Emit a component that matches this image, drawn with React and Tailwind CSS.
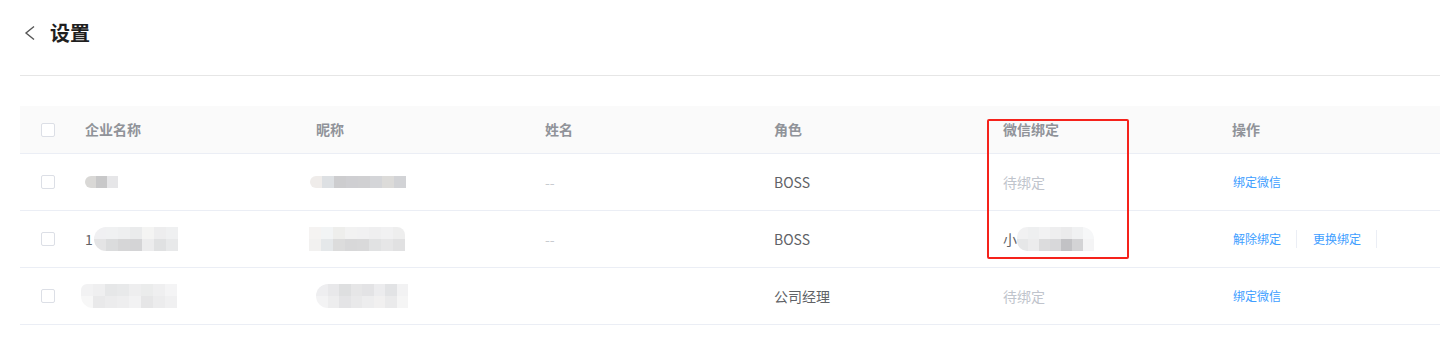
import React from 'react';

const cols = 'grid grid-cols-[53px_231px_229px_229px_229px_229px_1fr]';

const Checkbox = () => (
    <span className="block h-[14px] w-[14px] rounded-[2px] border border-[#dcdfe6] bg-white" />
);

// pixelated placeholder used where the original hides personal data
const Mosaic = ({ rows, tile = 12, className = '' }) => (
    <div className={`inline-flex flex-col overflow-hidden ${className}`}>
        {rows.map((row, i) => (
            <div key={i} className="flex">
                {row.map((c, j) => (
                    <span key={j} className="block" style={{ width: tile, height: 12, background: c }} />
                ))}
            </div>
        ))}
    </div>
);

const rows = [
    {
        company: <Mosaic className="rounded-l-full" tile={11} rows={[['#d9d8d6', '#c8c8c9', '#e6e6e8']]} />,
        nick: (
            <Mosaic
                className="-ml-[6px] rounded-l-[6px]"
                rows={[['#efecea', '#dde0e3', '#cdcdcf', '#cfcfd2', '#d0d0d2', '#d4d5d8', '#dcdbd9', '#d2d3d6']]}
            />
        ),
        role: 'BOSS',
        bound: null,
        actions: ['绑定微信'],
    },
    {
        company: (
            <div className="flex items-center">
                <span className="mr-px">1</span>
                <Mosaic
                    className="rounded-l-[12px]"
                    rows={[
                        ['#f0f0f2', '#f0f1f2', '#eeeff0', '#eaebec', '#f4f4f3', '#ededee', '#eff0f1'],
                        ['#e4e4e5', '#dbdcdd', '#d6d6d7', '#d4d4d6', '#ececed', '#e0e1e2', '#e8e9ea'],
                    ]}
                />
            </div>
        ),
        nick: (
            <Mosaic
                className="-ml-[7px] rounded-tr-[8px]"
                rows={[
                    ['#f5f3f2', '#f2f4f5', '#eeeeec', '#f2f2f2', '#f1f1f2', '#efeff0', '#f1f1f2', '#eeeeee'],
                    ['#f2f1f0', '#e5e8ea', '#dcdcdc', '#d8d8d9', '#d9d9da', '#e1e2e3', '#e6e6e7', '#e1e1e2'],
                ]}
            />
        ),
        role: 'BOSS',
        bound: (
            <div className="flex items-center">
                <span>小</span>
                <Mosaic
                    className="rounded-l-[10px] rounded-tr-[12px]"
                    tile={11}
                    rows={[
                        ['#f1f1f2', '#eeeff0', '#f2f2f3', '#eeeeef', '#ebebec', '#f0f1f2', '#f6f7f8'],
                        ['#e6e7e8', '#ececed', '#dcdcdd', '#d8d8da', '#c2c2c5', '#d3d3d5', '#f4f4f5'],
                    ]}
                />
            </div>
        ),
        actions: ['解除绑定', '更换绑定'],
    },
    {
        company: (
            <Mosaic
                className="-ml-[4px] rounded-bl-[12px] rounded-tl-[6px]"
                rows={[
                    ['#f2f2f3', '#efeff0', '#e6e7e8', '#e8e9ea', '#eeeeef', '#ebecec', '#efeff0', '#f4f4f5'],
                    ['#f7f7f7', '#e9e9ea', '#ececed', '#eeeeef', '#f2f2f3', '#e6e6e7', '#ececed', '#f0f0f1'],
                ]}
            />
        ),
        nick: (
            <Mosaic
                className="rounded-l-[12px]"
                tile={11.5}
                rows={[
                    ['#eeeef0', '#e8e8ea', '#dedfe0', '#e6e6e7', '#e3e3e5', '#ececee', '#e2e3e5', '#f2f2f3'],
                    ['#f3f3f4', '#ededee', '#e4e4e6', '#e9e9ea', '#ededee', '#f1f0f0', '#eaeaeb', '#f5f5f5'],
                ]}
            />
        ),
        name: '',
        role: '公司经理',
        bound: null,
        actions: ['绑定微信'],
    },
];

const App = () => {
    return (
        <div className="min-h-screen bg-white font-['Noto_Sans_CJK_SC','Noto_Sans',sans-serif] text-[14px] text-[#606266]">
            <div className="flex h-[75px] items-start pl-6 pt-[21px]">
                <div className="flex h-6 items-center">
                    <svg width="12" height="16" viewBox="0 0 12 16" fill="none" className="mr-[14px]">
                        <path d="M10 1.5L2 8l8 6.5" stroke="#555" strokeWidth="1.4" />
                    </svg>
                    <h1 className="text-[20px] font-bold leading-6 text-[#1f1f1f]">设置</h1>
                </div>
            </div>
            <div className="ml-5 h-px bg-[#e6e6e6]" />

            <div className="relative ml-5 mt-[30px]">
                <div className={`${cols} h-[48px] items-center border-b border-[#ebeef5] bg-[#fafafa] font-bold text-[#909399]`}>
                    <div className="pl-[21px]">
                        <Checkbox />
                    </div>
                    <div className="pl-3">企业名称</div>
                    <div className="pl-3">昵称</div>
                    <div className="pl-3">姓名</div>
                    <div className="pl-3">角色</div>
                    <div className="pl-3">微信绑定</div>
                    <div className="pl-3">操作</div>
                </div>

                {rows.map((r, i) => (
                    <div key={i} className={`${cols} h-[57px] items-center border-b border-[#ebeef5]`}>
                        <div className="pl-[21px]">
                            <Checkbox />
                        </div>
                        <div className="flex items-center pl-3">{r.company}</div>
                        <div className="flex items-center pl-3">{r.nick}</div>
                        <div className="pl-3 text-[#c8cbd0]">{r.name === '' ? '' : '--'}</div>
                        <div className="pl-3">{r.role}</div>
                        <div className="pl-3">{r.bound || <span className="text-[#c0c4cc]">待绑定</span>}</div>
                        <div className="flex items-center pl-3 text-[12px] text-[#409eff]">
                            {r.actions.map((a) => (
                                <React.Fragment key={a}>
                                    <span className="ml-px">{a}</span>
                                    {r.actions.length > 1 && <span className="mx-[15px] block h-[18px] w-px bg-[#ebeef5]" />}
                                </React.Fragment>
                            ))}
                        </div>
                    </div>
                ))}

                {/* red annotation frame around the wechat column */}
                <div className="pointer-events-none absolute left-[967px] top-[13px] h-[140px] w-[142px] rounded-[2px] border-2 border-[#f5221b]" />
            </div>
        </div>
    );
};

export default App;
